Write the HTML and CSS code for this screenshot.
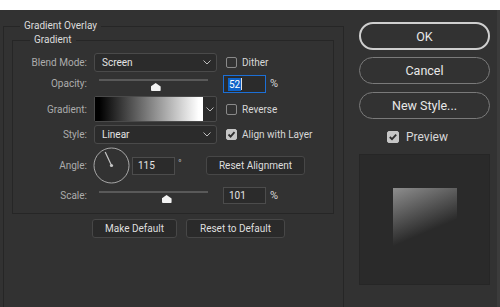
FILE: index.html
```html
<!DOCTYPE html>
<html lang="en">
<head>
    <meta charset="UTF-8">
    <meta name="viewport" content="width=device-width, initial-scale=1.0">
    <title>Layer Style - Gradient Overlay</title>
    <link rel="stylesheet" href="styles.css">
</head>
<body>
    <div class="topbar"></div>
    <div class="dialog">
        <fieldset class="group">
            <legend>Gradient Overlay</legend>
            <fieldset class="sub">
                <legend>Gradient</legend>
                <div class="rows">
                    <div class="row row-select">
                        <span class="label">Blend Mode:</span>
                        <div class="select">
                            <span>Screen</span>
                            <svg class="chevron" width="8" height="5" viewBox="0 0 8 5"><polyline points="0.5,0.5 4,4 7.5,0.5"/></svg>
                        </div>
                        <div class="check"><span class="box"></span>Dither</div>
                    </div>

                    <div class="row row-slider">
                        <span class="label">Opacity:</span>
                        <div class="slider">
                            <div class="track">
                                <span class="thumb" style="left: 52%"></span>
                            </div>
                        </div>
                        <div class="field focused"><span class="selected">52</span><span class="caret"></span></div>
                        <span class="unit">%</span>
                    </div>

                    <div class="row row-gradient">
                        <span class="label">Gradient:</span>
                        <div class="gradient-picker">
                            <div class="swatch"></div>
                            <div class="drop">
                                <svg class="chevron" width="8" height="5" viewBox="0 0 8 5"><polyline points="0.5,0.5 4,4 7.5,0.5"/></svg>
                            </div>
                        </div>
                        <div class="check"><span class="box"></span>Reverse</div>
                    </div>

                    <div class="row row-select">
                        <span class="label">Style:</span>
                        <div class="select">
                            <span>Linear</span>
                            <svg class="chevron" width="8" height="5" viewBox="0 0 8 5"><polyline points="0.5,0.5 4,4 7.5,0.5"/></svg>
                        </div>
                        <div class="check"><span class="box checked"><svg width="11" height="11" viewBox="0 0 11 11"><polyline points="2.5,5.5 4.6,7.6 8.5,3.2"/></svg></span>Align with Layer</div>
                    </div>

                    <div class="row row-angle">
                        <span class="label">Angle:</span>
                        <svg class="dial" width="37" height="37" viewBox="0 0 37 37">
                            <circle cx="18.5" cy="18.5" r="17.5"/>
                            <line x1="18.5" y1="18.5" x2="12.2" y2="4.9"/>
                            <circle class="hub" cx="18.5" cy="18.5" r="1.6"/>
                        </svg>
                        <div class="field">115</div>
                        <span class="degree">°</span>
                        <button class="btn small reset-align">Reset Alignment</button>
                    </div>

                    <div class="row row-slider">
                        <span class="label">Scale:</span>
                        <div class="slider">
                            <div class="track">
                                <span class="thumb" style="left: 62%"></span>
                            </div>
                        </div>
                        <div class="field">101</div>
                        <span class="unit">%</span>
                    </div>
                </div>
            </fieldset>

            <div class="defaults">
                <button class="btn small make-default">Make Default</button>
                <button class="btn small reset-default">Reset to Default</button>
            </div>
        </fieldset>

        <aside class="actions">
            <button class="btn pill primary">OK</button>
            <button class="btn pill">Cancel</button>
            <button class="btn pill">New Style...</button>
            <div class="check preview-check"><span class="box checked big"><svg width="12" height="12" viewBox="0 0 12 12"><polyline points="2.8,6 5,8.2 9.2,3.6"/></svg></span>Preview</div>
            <div class="preview">
                <div class="preview-swatch"></div>
            </div>
        </aside>
    </div>
</body>
</html>
```

FILE: styles.css
```css
:root {
    --panel: #323232;
    --line: #262626;
    --ctrl-bg: #2b2b2b;
    --ctrl-border: #4a4a4a;
    --label: #acacac;
    --text: #d8d8d8;
}

* {
    margin: 0;
    padding: 0;
    box-sizing: border-box;
}

body {
    font-family: Roboto, "Liberation Sans", sans-serif;
    font-size: 10px;
    color: var(--text);
    background: #fff;
    width: 500px;
    height: 307px;
    overflow: hidden;
}

.topbar {
    height: 10px;
    background: #fff;
}

.dialog {
    display: flex;
    height: 297px;
    background: var(--panel);
    border-right: 3px solid #3b3b3b;
    overflow: hidden;
}

/* Groups */
.group {
    flex: none;
    width: 341px;
    margin: 9px 0 0 3px;
    border: 1px solid var(--line);
    border-bottom: 0;
    padding: 0 9px 0 8px;
    min-width: 0;
}

legend {
    line-height: 14px;
    padding: 0 4px;
    color: #dcdcdc;
    font-size: 10px;
}

.group > legend {
    margin-left: 8px;
}

.sub {
    border: 1px solid var(--line);
    padding: 6px 0 9px 0;
    min-width: 0;
}

.sub > legend {
    margin-left: 17px;
}

.rows {
    display: flex;
    flex-direction: column;
    gap: 3px;
}

.row {
    display: flex;
    align-items: center;
}

.row-select { height: 19px; }
.row-slider { height: 18px; align-items: flex-start; }
.row-gradient { height: 26px; }
.row-angle { height: 37px; }
.row-slider:last-child { height: 17px; }

.label {
    width: 74px;
    margin-right: 7px;
    text-align: right;
    color: var(--label);
}

.row-slider .label {
    line-height: 18px;
}

/* Dropdowns */
.select {
    width: 123px;
    height: 19px;
    display: flex;
    align-items: center;
    justify-content: space-between;
    padding: 0 5px 0 7px;
    background: var(--ctrl-bg);
    border: 1px solid var(--ctrl-border);
    border-radius: 3px;
    color: #e4e4e4;
}

.chevron polyline {
    fill: none;
    stroke: #bdbdbd;
    stroke-width: 1;
}

/* Checkboxes */
.check {
    display: flex;
    align-items: center;
    margin-left: 9px;
    color: var(--text);
}

.box {
    width: 11px;
    height: 11px;
    margin-right: 5px;
    border: 1px solid #8a8a8a;
    border-radius: 2px;
    display: flex;
}

.box.checked {
    background: #c6c6c6;
    border-color: #c6c6c6;
}

.box svg {
    margin: -1px;
}

.box polyline {
    fill: none;
    stroke: #2e2e2e;
    stroke-width: 1.8;
}

/* Sliders */
.slider {
    width: 123px;
    padding: 4px 9px 0 5px;
}

.track {
    position: relative;
    height: 2px;
    background: #595959;
}

.thumb {
    position: absolute;
    top: 4px;
    width: 10px;
    height: 8px;
    margin-left: -5px;
    background: #f2f2f2;
    clip-path: polygon(50% 0, 100% 45%, 100% 100%, 0 100%, 0 45%);
    border-radius: 1px;
}

.field {
    width: 43px;
    height: 18px;
    margin-left: 6px;
    padding-left: 5px;
    background: var(--ctrl-bg);
    border: 1px solid #4c4c4c;
    color: #e4e4e4;
    display: flex;
    align-items: center;
}

.row-slider:last-child .field {
    height: 17px;
}

.field.focused {
    border-color: #1c6fd6;
    padding-left: 4px;
}

.selected {
    background: #0f63c9;
    color: #fff;
    padding: 0 1px;
    line-height: 13px;
}

.caret {
    width: 1px;
    height: 12px;
    background: #e0e0e0;
}

.unit {
    margin-left: 4px;
    line-height: 18px;
    font-size: 11px;
    color: var(--text);
}

/* Gradient picker */
.gradient-picker {
    width: 123px;
    height: 26px;
    display: flex;
    border: 1px solid var(--ctrl-border);
    border-radius: 2px;
    background: var(--ctrl-bg);
}

.swatch {
    flex: 1;
    background: linear-gradient(to right, #000 4%, #fff 96%);
}

.drop {
    width: 13px;
    display: flex;
    align-items: center;
    justify-content: center;
}

/* Angle */
.dial {
    margin-left: -1px;
}

.dial circle {
    fill: none;
    stroke: #a8a8a8;
    stroke-width: 1;
}

.dial line {
    stroke: #c4c4c4;
    stroke-width: 1.2;
}

.dial .hub {
    fill: #c4c4c4;
    stroke: none;
}

.row-angle .field {
    margin-left: 2px;
}

.degree {
    width: 31px;
    padding-left: 3px;
    margin-top: -5px;
    color: var(--label);
}

/* Buttons */
.btn {
    font-family: inherit;
    font-size: 10px;
    color: #dedede;
    background: #2a2a2a;
    border: 1px solid #474747;
    border-radius: 3px;
    cursor: pointer;
}

.btn.small {
    height: 19px;
}

.reset-align { width: 99px; }

.defaults {
    display: flex;
    gap: 9px;
    margin: 5px 0 0 80px;
}

.make-default { width: 85px; }
.reset-default { width: 99px; }

/* Right column */
.actions {
    flex: none;
    width: 131px;
    margin-left: 15px;
    padding-top: 12px;
    display: flex;
    flex-direction: column;
}

.btn.pill {
    height: 27px;
    margin-top: 8px;
    background: transparent;
    border: 1px solid #7a7a7a;
    border-radius: 14px;
    font-size: 12.5px;
    color: #e8e8e8;
}

.btn.pill.primary {
    height: 28px;
    margin-top: 0;
    border: 2px solid #cfcfcf;
}

.btn.pill.primary + .btn.pill {
    margin-top: 7px;
}

.preview-check {
    margin: 11px 0 0 28px;
    font-size: 12px;
}

.box.big {
    width: 12px;
    height: 12px;
    margin-right: 7px;
}

.preview {
    margin-top: 10px;
    height: 131px;
    background: #2a2a2a;
    border: 1px solid #262626;
    display: flex;
    align-items: center;
    justify-content: center;
}

.preview-swatch {
    width: 64px;
    height: 64px;
    background: linear-gradient(157deg, #8e8e8e 0%, #2a2a2a 64%);
}
```
